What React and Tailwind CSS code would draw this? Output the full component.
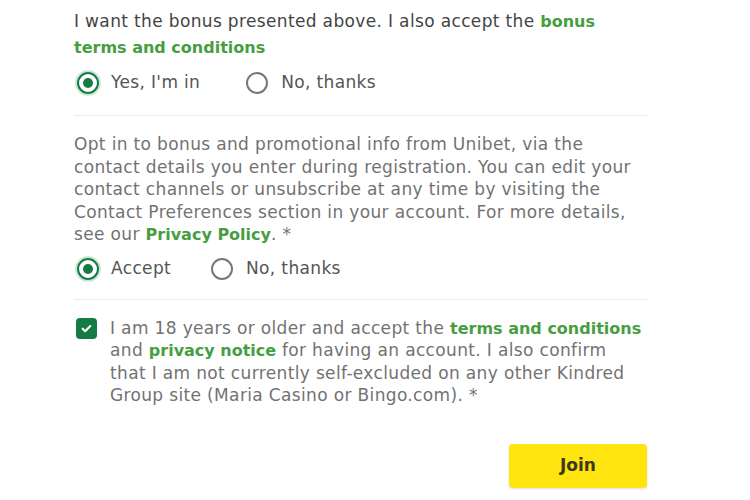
import React, { useState } from 'react'

// radio button drawn like the Unibet form
const Radio = ({ checked, label, onClick, gap }) => (
    <button type="button" onClick={onClick} className={`flex items-center ${gap}`}>
        <span className={`flex items-center justify-center w-[22px] h-[22px] rounded-full border-2 ${checked ? 'border-[#147b45] ring-2 ring-[#cfe8d9]' : 'border-[#777]'}`}>
            {checked && <span className="w-[10px] h-[10px] rounded-full bg-[#147b45]"></span>}
        </span>
        <span className="text-[#555]">{label}</span>
    </button>
)

// green bold link inside the texts
const Link = ({ children }) => (
    <a className="font-semibold text-[16px] leading-none tracking-normal text-[#479e42]">{children}</a>
)

const App = () => {

    const [bonus, setBonus] = useState(true);
    const [promo, setPromo] = useState(true);
    const [adult, setAdult] = useState(true);

    return (
        <main className="w-[750px] h-[500px] bg-white overflow-hidden" style={{ fontFamily: '"DejaVu Sans", sans-serif' }}>
            <div className="ml-[74px] w-[573px] text-[17px] tracking-[0.35px]">

                {/* bonus */}
                <p className="pt-[8px] leading-[26px] text-[#444]">
                    I want the bonus presented above. I also accept the <Link>bonus terms and conditions</Link>
                </p>
                <div className="flex items-center mt-[11px] h-[24px] ml-[3px]">
                    <Radio checked={bonus} label="Yes, I'm in" onClick={() => setBonus(true)} gap="gap-[12px] mr-[46px]" />
                    <Radio checked={!bonus} label="No, thanks" onClick={() => setBonus(false)} gap="gap-[13px]" />
                </div>

                <hr className="mt-[20px] border-[#ececec]" />

                {/* promotional info */}
                <p className="mt-[17px] leading-[22.5px] text-[#727272]">
                    Opt in to bonus and promotional info from Unibet, via the contact details you enter during registration. You can edit your contact channels or unsubscribe at any time by visiting the Contact Preferences section in your account. For more details, see our <Link>Privacy Policy</Link>. *
                </p>
                <div className="flex items-center mt-[11px] h-[24px] ml-[3px]">
                    <Radio checked={promo} label="Accept" onClick={() => setPromo(true)} gap="gap-[12px] mr-[40px]" />
                    <Radio checked={!promo} label="No, thanks" onClick={() => setPromo(false)} gap="gap-[13px]" />
                </div>

                <hr className="mt-[18px] border-[#ececec]" />

                {/* terms */}
                <div className="flex mt-[17px]">
                    <button type="button" onClick={() => setAdult(!adult)}
                        className={`shrink-0 mt-[1px] ml-[2px] w-[21px] h-[21px] rounded-[4px] flex items-center justify-center ${adult ? 'bg-[#147b45]' : 'border-2 border-[#777]'}`}>
                        {adult && (
                            <svg viewBox="0 0 24 24" className="w-[13px] h-[13px]" fill="none" stroke="white" strokeWidth="4" strokeLinecap="round" strokeLinejoin="round">
                                <path d="M5 12.5l4.5 4.5L19 7.5" />
                            </svg>
                        )}
                    </button>
                    <p className="ml-[13px] leading-[22.5px] text-[#727272]">
                        I am 18 years or older and accept the <Link>terms and conditions</Link> and <Link>privacy notice</Link> for having an account. I also confirm that I am not currently self-excluded on any other Kindred Group site (Maria Casino or Bingo.com). *
                    </p>
                </div>

                <div className="flex justify-end mt-[37px]">
                    <button type="submit" className="w-[138px] h-[44px] rounded-[4px] bg-[#ffe40f] text-[#3b3a1c] font-bold text-[17px] tracking-normal shadow-sm">
                        Join
                    </button>
                </div>
            </div>
        </main>
    )
}

export default App
